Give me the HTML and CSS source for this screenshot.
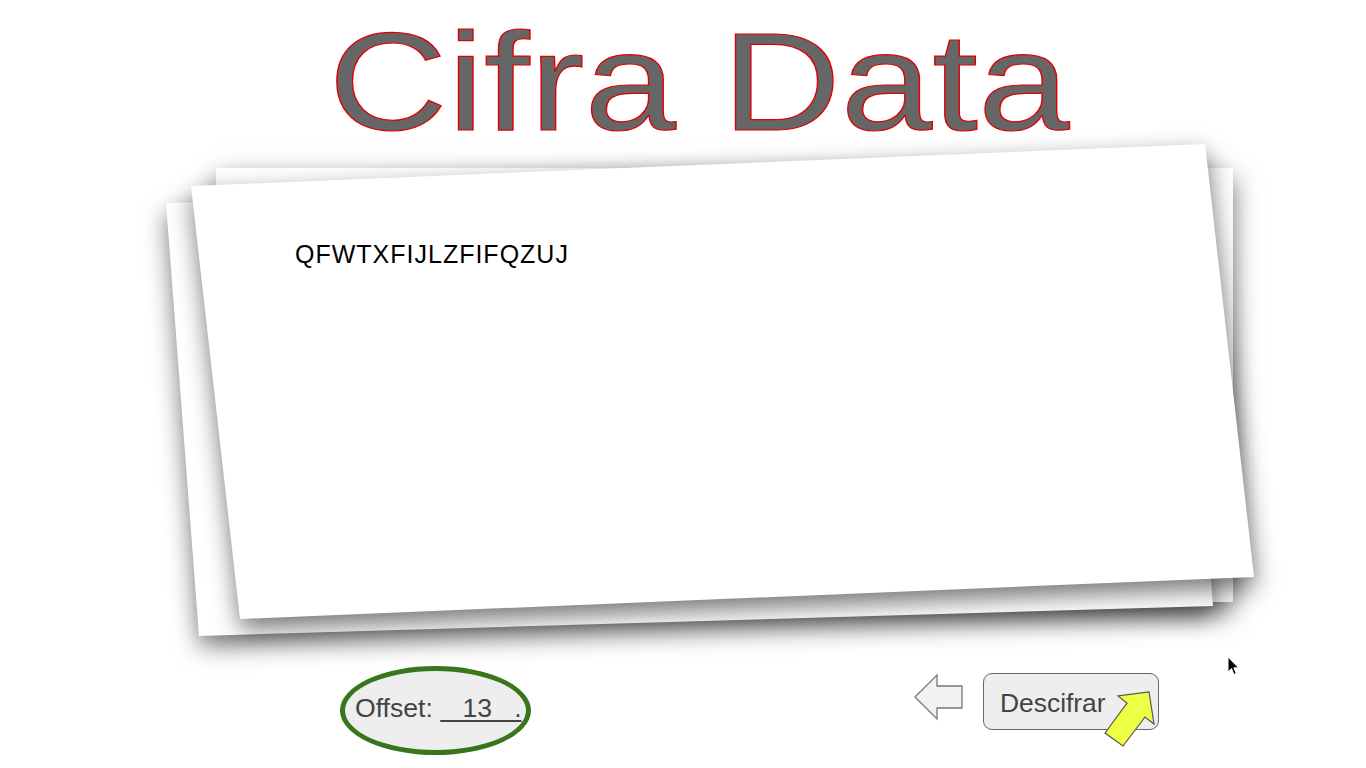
FILE: index.html
```html
<!DOCTYPE html>
<html lang="es">
<head>
<meta charset="utf-8">
<title>Cifra Data</title>
<link rel="stylesheet" href="styles.css">
</head>
<body>
<div class="page">
  <header class="title"><h1>Cifra Data</h1></header>
  <main class="stack">
    <div class="sheet sheet-back"></div>
    <div class="sheet sheet-mid"></div>
    <div class="sheet sheet-top"></div>
    <div class="cipher">QFWTXFIJLZFIFQZUJ</div>
  </main>
  <footer class="controls">
    <div class="offset">Offset:&nbsp;<span class="value">&nbsp;&nbsp;&nbsp;13&nbsp;&nbsp;&nbsp;.</span></div>
    <div class="actions">
      <svg class="back" width="52" height="48" viewBox="0 0 52 48"><polygon points="2,24 24,2 24,13 49,13 49,35 24,35 24,46" fill="#f2f2f2" stroke="#777" stroke-width="1.3"/></svg>
      <button class="decode">Descifrar
        <svg class="go" width="60" height="66" viewBox="0 0 60 66"><polygon points="50,6 55,38 46,31 24,60 6,47 28,17 19,10" fill="#eeff44" stroke="#555" stroke-width="1.2" stroke-linejoin="miter"/></svg>
      </button>
    </div>
  </footer>
  <svg class="cursor" width="13" height="20" viewBox="0 0 13 20"><path d="M1,1 L1,16 L4.5,12.5 L7,18.5 L9.3,17.5 L6.8,11.8 L11.5,11.8 Z" fill="#000" stroke="#fff" stroke-width="1"/></svg>
</div>
</body>
</html>
```
FILE: styles.css
```css
html, body {
  margin: 0;
  padding: 0;
  background: #fff;
}
body {
  font-family: "Liberation Sans", Arial, sans-serif;
  overflow: hidden;
}
.page {
  position: relative;
  box-sizing: border-box;
  width: 1366px;
  height: 768px;
  padding-top: 12px;
}
.title {
  display: flex;
  justify-content: center;
  height: 142px;
  padding-left: 32px;
}
.title h1 {
  margin: 0;
  font-size: 140px;
  line-height: 140px;
  font-weight: normal;
  color: #666;
  -webkit-text-stroke: 1.2px #e00000;
  transform: scaleX(1.176);
  white-space: nowrap;
}
.stack {
  display: grid;
  width: 1017px;
  height: 434px;
  margin: 14px 0 0 216px;
}
.stack > * {
  grid-area: 1 / 1;
}
.sheet {
  background: #fff;
  box-shadow: 0 10px 24px rgba(0, 0, 0, 0.55);
  transform-origin: 50% 50%;
}
.sheet-back {
  transform: matrix(0.9971, -0.0295, 0.076, 0.9977, -35, 19.5);
}
.sheet-top {
  transform: matrix(0.9971, -0.0413, 0.1129, 0.9977, -2, -3.5);
}
.cipher {
  align-self: start;
  position: relative;
  padding: 72px 0 0 79px;
  font-size: 25px;
  letter-spacing: 1px;
  color: #000;
}
.controls {
  display: flex;
  align-items: flex-start;
  margin-top: 64px;
  padding-left: 340px;
}
.offset {
  box-sizing: border-box;
  width: 191px;
  height: 89px;
  border: 5px solid #38761d;
  border-radius: 50%;
  background: #eee;
  display: flex;
  align-items: center;
  padding: 0 0 5px 10px;
  font-size: 26.6px;
  color: #444;
  white-space: nowrap;
}
.value {
  text-decoration: underline;
  text-decoration-thickness: 2px;
  text-underline-offset: 3px;
}
.actions {
  display: flex;
  align-items: flex-start;
  margin-left: 382px;
}
.back {
  display: block;
  margin-top: 7px;
}
.decode {
  position: relative;
  box-sizing: border-box;
  width: 176px;
  height: 57px;
  margin: 7px 0 0 18px;
  border: 1px solid #666;
  border-radius: 9px;
  background: #eee;
  font-family: "Liberation Sans", Arial, sans-serif;
  font-size: 26.4px;
  color: #444;
  text-align: left;
  padding: 4px 0 0 16px;
}
.go {
  position: absolute;
  left: 115px;
  top: 12px;
}
.cursor {
  position: absolute;
  left: 1227px;
  top: 656px;
}
```
